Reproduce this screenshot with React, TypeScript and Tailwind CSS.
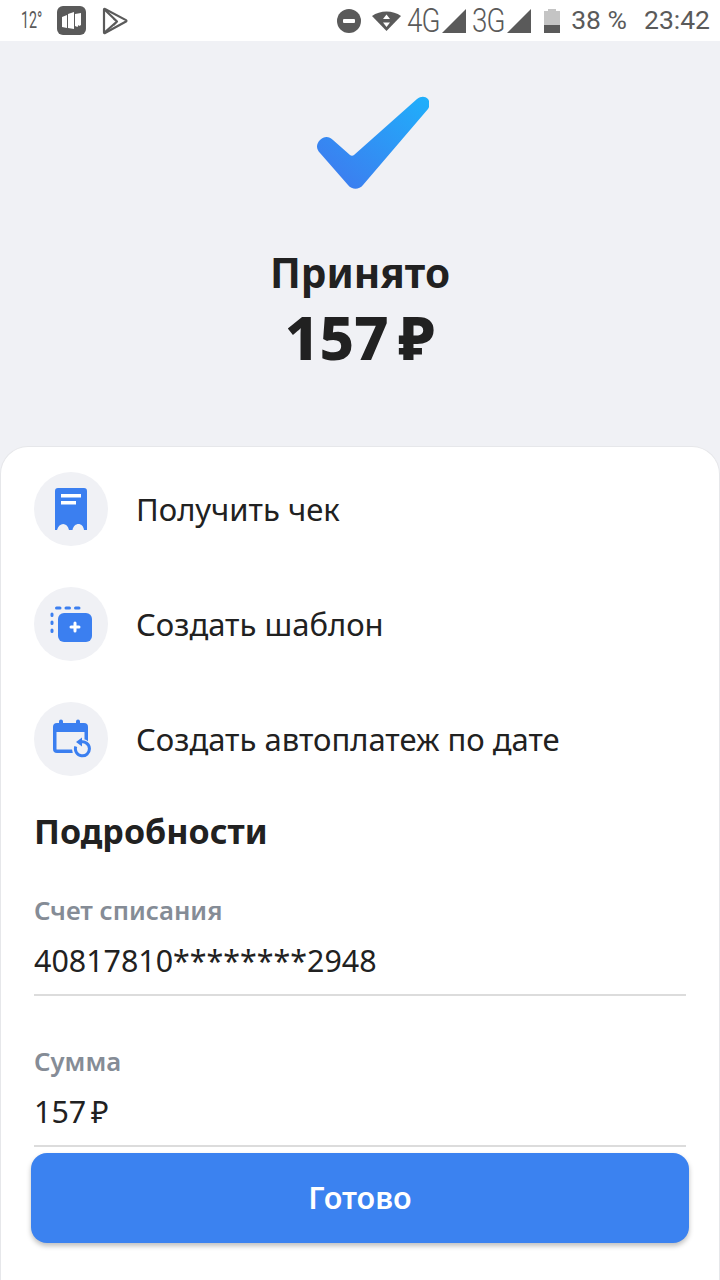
import type { ReactNode } from "react";

function StatusBar() {
  return (
    <div className="flex h-[41px] items-center justify-between bg-white pl-[21px] pr-[10px] font-['Roboto',sans-serif] text-[#5a5a5a]">
      <div className="flex items-center">
        <span className="w-[20px] origin-left scale-x-[0.62] whitespace-nowrap text-[23px] leading-none">12°</span>
        <svg className="ml-[16px]" width="29" height="29" viewBox="0 0 29 29">
          <rect width="29" height="29" rx="6" fill="#5a5a5a" />
          <path d="M5 11l5-2v13l-5-1zM11 8l6-2v17l-6-1zM18 8l6-1v12l-1.500 1-1-1-1 2-2.500-1z" fill="#fff" />
        </svg>
        <svg className="ml-[16px]" width="26" height="28" viewBox="0 0 26 28" fill="none" stroke="#5a5a5a" strokeWidth="2.200" strokeLinejoin="round">
          <path d="M2 2.500v23c0 .5.500.8 1 .5l21-11.500c.6-.4.600-1 0-1.400L3 2c-.5-.3-1 0-1 .5z" />
          <path d="M2.500 2.500l12.500 12-12.500 11M15 14.500l-3.500-3M15 14.500l-3.500 3.500" />
        </svg>
      </div>
      <div className="flex items-center">
        <svg width="24" height="24" viewBox="0 0 24 24">
          <circle cx="12" cy="12" r="12" fill="#5a5a5a" />
          <rect x="6" y="10" width="12" height="4" rx="1" fill="#fff" />
        </svg>
        <svg className="ml-[11px]" width="29" height="20" viewBox="0 0 29 20">
          <path d="M0 5C8-1 21-1 29 5L14.500 20z" fill="#5a5a5a" />
          <path d="M14.500 3.500l3.500 4.500h-7zM14.500 16l-3.500-4.500h7z" fill="#fff" />
        </svg>
        <span className="ml-[6px] w-[30px] origin-left scale-x-[0.84] whitespace-nowrap text-[33px] font-light leading-none tracking-[-1px]">4G</span>
        <svg width="24" height="24" className="ml-[5px]" viewBox="0 0 24 24">
          <path d="M24 0v24H0z" fill="#5a5a5a" />
        </svg>
        <span className="ml-[6px] w-[30px] origin-left scale-x-[0.84] whitespace-nowrap text-[33px] font-light leading-none tracking-[-1px]">3G</span>
        <svg width="24" height="24" className="ml-[5px]" viewBox="0 0 24 24">
          <path d="M24 0v24H0z" fill="#5a5a5a" />
        </svg>
        <svg className="ml-[13px]" width="16" height="24" viewBox="0 0 16 24">
          <path d="M4 0h8v2h4v22H0V2h4z" fill="#c4c4c4" />
          <rect y="16" width="16" height="8" fill="#5a5a5a" />
        </svg>
        <span className="ml-[11px] whitespace-nowrap text-[26.500px] leading-none">38 %</span>
        <span className="ml-[17px] whitespace-nowrap text-[26.500px] leading-none">23:42</span>
      </div>
    </div>
  );
}

function ActionRow({ icon, label }: { icon: ReactNode; label: string }) {
  return (
    <div className="flex h-[74px] items-center">
      <div className="flex h-[74px] w-[74px] items-center justify-center rounded-full bg-[#f0f1f5]">{icon}</div>
      <span className="ml-[28px] text-[31px] text-[#212121]">{label}</span>
    </div>
  );
}

function Field({ label, value }: { label: string; value: string }) {
  return (
    <div className="border-b-2 border-[#dcdcdc]">
      <div className="h-[36px] text-[25.700px] font-semibold leading-[36px] text-[#858c96]">{label}</div>
      <div className="mt-[12px] h-[53px] text-[30.400px] leading-[40px] text-[#212121] [word-spacing:-3px]">{value}</div>
    </div>
  );
}

export default function App() {
  return (
    <div className="flex h-[1280px] w-[720px] flex-col overflow-hidden bg-[#f0f1f5] font-['Noto_Sans',sans-serif]">
      <StatusBar />
      <div className="flex h-[405px] flex-col items-center">
        <svg className="ml-[26px] mt-[55px]" width="112" height="94" viewBox="0 0 112 94">
          <defs>
            <linearGradient id="check" x1="0" y1="1" x2="1" y2="0">
              <stop offset="0.15" stopColor="#3b7ff0" />
              <stop offset="1" stopColor="#1fb0fb" />
            </linearGradient>
          </defs>
          <path
            d="M3 57c-4-4-4-9 0-13 4-4 9-4 13 0l17 15c1 1 3 1 4 0L100 3c4-3 8-3 11 0 2 3 2 7 0 10L46 89c-4 5-11 5-15 0z"
            fill="url(#check)"
          />
        </svg>
        <div className="mt-[57px] text-[40.500px] font-bold leading-[52px] text-[#212121]">Принято</div>
        <div className="mt-[2px] text-[60px] font-extrabold leading-[72px] text-[#212121] [word-spacing:-6px]">157 ₽</div>
      </div>
      <div className="flex-1 rounded-t-[28px] border-l border-r border-t border-[#e6e7ea] bg-white pl-[33px] pr-[33px] pt-[25px]">
        <div className="flex flex-col gap-[41px]">
          <ActionRow
            label="Получить чек"
            icon={
              <svg width="32" height="43" viewBox="0 0 32 43">
                <path
                  d="M0 3a3 3 0 0 1 3-3h26a3 3 0 0 1 3 3v39h-3C28 34 19 34 17.500 42h-3.500C12.500 34 4 34 2 42H0z"
                  fill="#3b7ff0"
                />
                <rect x="6" y="6" width="20" height="3.500" fill="#fff" />
                <rect x="6" y="13" width="15" height="3.500" fill="#fff" />
              </svg>
            }
          />
          <ActionRow
            label="Создать шаблон"
            icon={
              <svg width="42" height="36" viewBox="0 0 42 36">
                <rect x="8" y="7" width="34" height="29" rx="6" fill="#3b7ff0" />
                <path d="M25 17v8M21 21h8" stroke="#fff" strokeWidth="3" strokeLinecap="round" />
                <path d="M6.500 2h24" stroke="#3b7ff0" strokeWidth="3" strokeLinecap="round" strokeDasharray="3.500 6" fill="none" />
                <path d="M2 8v20" stroke="#3b7ff0" strokeWidth="3" strokeLinecap="round" strokeDasharray="1.500 6.500" fill="none" />
              </svg>
            }
          />
          <ActionRow
            label="Создать автоплатеж по дате"
            icon={
              <svg width="40" height="40" viewBox="0 0 40 40">
                <path
                  d="M6 4h2V2.500a2 2 0 0 1 4 0V4h13V2.500a2 2 0 0 1 4 0V4h4a4 4 0 0 1 4 4v22a4 4 0 0 1-4 4H6a4 4 0 0 1-4-4V8a4 4 0 0 1 4-4z"
                  fill="#3b7ff0"
                />
                <path d="M5.500 13h28v17a.5.5 0 0 1-.5.5H6a.5.5 0 0 1-.5-.5z" fill="#f0f1f5" />
                <circle cx="31" cy="30" r="10" fill="#f0f1f5" />
                <path d="M24.800 27.500a7 7 0 1 0 5-4.500" stroke="#3b7ff0" strokeWidth="3" fill="none" />
                <path d="M31 18.500v9l-6-4.500z" fill="#3b7ff0" />
              </svg>
            }
          />
        </div>
        <div className="mt-[30px] text-[34px] font-bold leading-[50px] text-[#212121]">Подробности</div>
        <div className="mt-[37px] flex flex-col gap-[48px]">
          <Field label="Счет списания" value="40817810********2948" />
          <Field label="Сумма" value="157 ₽" />
        </div>
        <button className="-ml-[3px] mt-[6px] flex h-[90px] w-[658px] items-center justify-center rounded-[16px] bg-[#3b82f0] text-[30.500px] font-semibold text-white shadow-[0_3px_5px_rgba(0,0,0,0.25)]">
          Готово
        </button>
      </div>
    </div>
  );
}
